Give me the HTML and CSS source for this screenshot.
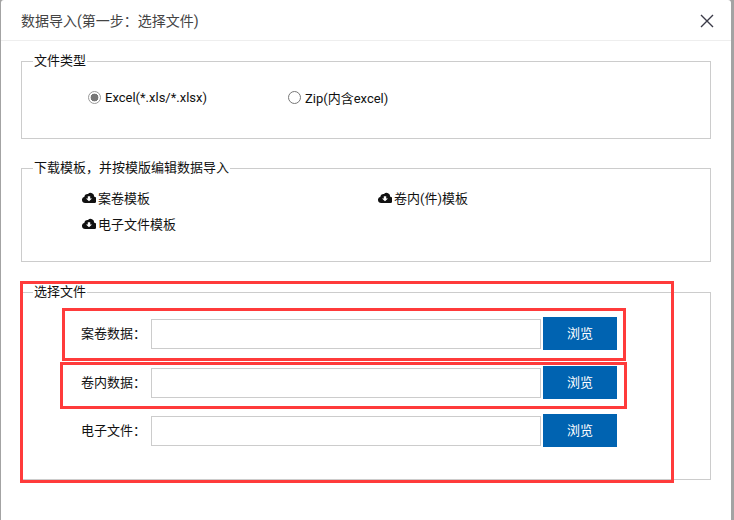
FILE: index.html
```html
<!DOCTYPE html>
<html lang="zh-CN">
<head>
  <meta charset="UTF-8" />
  <title>数据导入</title>
  <link rel="stylesheet" href="styles.css">
</head>
<body>
  <div class="dialog">
    <div class="dialog-header">
      <span class="dialog-title">数据导入(第一步：选择文件)</span>
      <svg class="close-icon" width="14" height="14" viewBox="0 0 14 14">
        <path d="M1 1L13 13M13 1L1 13" stroke="#3a3a48" stroke-width="1.4" fill="none"/>
      </svg>
    </div>

    <div class="dialog-body">
      <fieldset class="group group-type">
        <legend>文件类型</legend>
        <div class="radio-row">
          <label class="radio-item"><span class="radio checked"></span>Excel(*.xls/*.xlsx)</label>
          <label class="radio-item"><span class="radio"></span>Zip(内含excel)</label>
        </div>
      </fieldset>

      <fieldset class="group group-template">
        <legend>下载模板，并按模版编辑数据导入</legend>
        <div class="template-grid">
          <a class="template-link">
            <svg class="cloud-icon" width="14" height="11" viewBox="0 0 14 11"><path fill-rule="evenodd" d="M3.2 11A3.2 3.2 0 0 1 2.4 4.7 3 3 0 0 1 6 2 3.6 3.6 0 0 1 12.2 4.7 3.2 3.2 0 0 1 11 11ZM5.8 4.2V6.4H4L7 9.2 10 6.4H8.2V4.2Z"/></svg>案卷模板
          </a>
          <a class="template-link">
            <svg class="cloud-icon" width="14" height="11" viewBox="0 0 14 11"><path fill-rule="evenodd" d="M3.2 11A3.2 3.2 0 0 1 2.4 4.7 3 3 0 0 1 6 2 3.6 3.6 0 0 1 12.2 4.7 3.2 3.2 0 0 1 11 11ZM5.8 4.2V6.4H4L7 9.2 10 6.4H8.2V4.2Z"/></svg>卷内(件)模板
          </a>
          <a class="template-link">
            <svg class="cloud-icon" width="14" height="11" viewBox="0 0 14 11"><path fill-rule="evenodd" d="M3.2 11A3.2 3.2 0 0 1 2.4 4.7 3 3 0 0 1 6 2 3.6 3.6 0 0 1 12.2 4.7 3.2 3.2 0 0 1 11 11ZM5.8 4.2V6.4H4L7 9.2 10 6.4H8.2V4.2Z"/></svg>电子文件模板
          </a>
        </div>
      </fieldset>

      <fieldset class="group group-file">
        <legend>选择文件</legend>
        <div class="file-row">
          <span class="file-label">案卷数据：</span>
          <input class="file-input" type="text" />
          <button class="browse-button">浏览</button>
        </div>
        <div class="file-row">
          <span class="file-label">卷内数据：</span>
          <input class="file-input" type="text" />
          <button class="browse-button">浏览</button>
        </div>
        <div class="file-row">
          <span class="file-label">电子文件：</span>
          <input class="file-input" type="text" />
          <button class="browse-button">浏览</button>
        </div>
      </fieldset>
    </div>

    <!-- red marks drawn over the screenshot -->
    <div class="mark mark-outer"></div>
    <div class="mark mark-first"></div>
    <div class="mark mark-second"></div>
  </div>
</body>
</html>
```

FILE: styles.css
```css
* {
  box-sizing: border-box;
}

html, body {
  height: 100%;
}

body {
  margin: 0;
  overflow: hidden;
  background-color: #a3a3a3;
  font-family: Roboto, "Noto Sans CJK SC", sans-serif;
  font-size: 13px;
  color: #111;
}

.dialog {
  position: relative;
  width: 730px;
  height: 520px;
  margin-left: 1px;
  background-color: #fff;
  border-top-left-radius: 3px;
  border-top-right-radius: 3px;
}

.dialog-header {
  display: flex;
  align-items: center;
  justify-content: space-between;
  height: 41px;
  padding: 0 17px 0 20px;
  border-bottom: 1px solid #eee;
}

.dialog-title {
  margin-bottom: 1px;
  font-size: 14px;
  color: #444;
}

.close-icon {
  margin-top: 2px;
}

.dialog-body {
  padding: 11px 20px 0;
}

.group {
  width: 690px;
  margin: 0;
  padding: 0;
  border: 1px solid #ccc;
}

.group legend {
  margin-left: 11px;
  padding: 0 1px;
  line-height: 18px;
}

.group-type {
  height: 87px;
  margin-bottom: 20px;
}

.group-template {
  height: 103px;
  margin-bottom: 21px;
}

.group-file {
  height: 197px;
}

.radio-row {
  display: flex;
  padding: 17px 0 0 66px;
}

.radio-item {
  display: flex;
  align-items: center;
  width: 200px;
  height: 20px;
}

.radio {
  width: 13px;
  height: 13px;
  margin-right: 4px;
  border: 1px solid #777;
  border-radius: 50%;
  background-color: #fff;
}

.radio.checked {
  border-color: #999;
  background: radial-gradient(circle, #777 0 3.6px, #fff 4.2px);
}

.template-grid {
  display: grid;
  grid-template-columns: 296px 296px;
  grid-auto-rows: 26px;
  padding: 7px 0 0 60px;
}

.template-link {
  display: flex;
  align-items: center;
}

.cloud-icon {
  margin-right: 2px;
  fill: #111;
}

.file-row {
  display: flex;
  align-items: flex-start;
  height: 48.5px;
  padding-left: 59px;
}

.file-row:first-of-type {
  margin-top: 16px;
}

.file-label {
  width: 70px;
  line-height: 30px;
  margin-top: 2px;
  white-space: nowrap;
}

.file-input {
  width: 390px;
  height: 30px;
  margin-top: 2px;
  border: 1px solid #ccc;
  background-color: #fff;
}

.browse-button {
  width: 74px;
  height: 33px;
  margin-left: 2px;
  padding: 0 0 2px;
  border: none;
  background-color: #0063b1;
  color: #fff;
  font-family: inherit;
  font-size: 13px;
}

.mark {
  position: absolute;
  border: 3px solid #ff3b3b;
  pointer-events: none;
}

.mark-outer {
  left: 19px;
  top: 281px;
  width: 654px;
  height: 202px;
}

.mark-first {
  left: 61px;
  top: 308px;
  width: 564px;
  height: 53px;
}

.mark-second {
  left: 59px;
  top: 362px;
  width: 567px;
  height: 47px;
}
```
